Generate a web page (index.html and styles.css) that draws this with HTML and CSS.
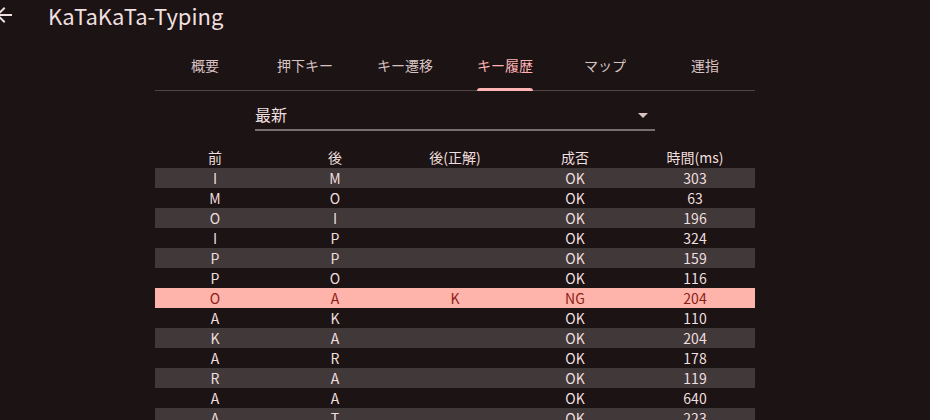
FILE: index.html
```html
<!DOCTYPE html>
<html lang="ja">
<head>
<meta charset="utf-8">
<title>KaTaKaTa-Typing</title>
<link rel="stylesheet" href="styles.css">
</head>
<body>
<header class="appbar">
  <svg class="back" viewBox="0 0 24 24" width="24" height="24"><path fill="currentColor" d="M20 11H7.83l5.59-5.59L12 4l-8 8 8 8 1.41-1.41L7.83 13H20v-2z"/></svg>
  <h1 class="title">KaTaKaTa-Typing</h1>
</header>
<main class="content">
  <nav class="tabs">
    <div class="tab"><span>概要</span></div>
    <div class="tab"><span>押下キー</span></div>
    <div class="tab"><span>キー遷移</span></div>
    <div class="tab active"><span>キー履歴</span></div>
    <div class="tab"><span>マップ</span></div>
    <div class="tab"><span>運指</span></div>
  </nav>
  <div class="select-wrap">
    <div class="select">
      <span class="select-text">最新</span>
      <span class="caret"></span>
    </div>
  </div>
  <table class="history">
    <thead>
      <tr><th>前</th><th>後</th><th>後(正解)</th><th>成否</th><th>時間(ms)</th></tr>
    </thead>
    <tbody>
      <tr class="stripe"><td>I</td><td>M</td><td></td><td>OK</td><td>303</td></tr>
      <tr><td>M</td><td>O</td><td></td><td>OK</td><td>63</td></tr>
      <tr class="stripe"><td>O</td><td>I</td><td></td><td>OK</td><td>196</td></tr>
      <tr><td>I</td><td>P</td><td></td><td>OK</td><td>324</td></tr>
      <tr class="stripe"><td>P</td><td>P</td><td></td><td>OK</td><td>159</td></tr>
      <tr><td>P</td><td>O</td><td></td><td>OK</td><td>116</td></tr>
      <tr class="ng"><td>O</td><td>A</td><td>K</td><td>NG</td><td>204</td></tr>
      <tr><td>A</td><td>K</td><td></td><td>OK</td><td>110</td></tr>
      <tr class="stripe"><td>K</td><td>A</td><td></td><td>OK</td><td>204</td></tr>
      <tr><td>A</td><td>R</td><td></td><td>OK</td><td>178</td></tr>
      <tr class="stripe"><td>R</td><td>A</td><td></td><td>OK</td><td>119</td></tr>
      <tr><td>A</td><td>A</td><td></td><td>OK</td><td>640</td></tr>
      <tr class="stripe"><td>A</td><td>T</td><td></td><td>OK</td><td>223</td></tr>
    </tbody>
  </table>
</main>
</body>
</html>
```

FILE: styles.css
```css
html, body {
  margin: 0;
  padding: 0;
  background: #1b1314;
  color: #f0dfdf;
  font-family: "Noto Sans CJK JP", "Noto Sans", sans-serif;
  overflow: hidden;
  height: 420px;
}

.appbar {
  display: flex;
  align-items: center;
  height: 30px;
}

.back {
  margin-left: -8px;
  color: #f0dfdf;
  flex: none;
}

.title {
  margin: 0 0 0 32px;
  font-size: 22px;
  font-weight: 400;
  line-height: 30px;
  color: #f0dfdf;
}

.content {
  width: 600px;
  margin: 12px 0 0 155px;
}

.tabs {
  display: flex;
  height: 48px;
  border-bottom: 1px solid #524344;
}

.tab {
  flex: 1;
  display: flex;
  justify-content: center;
  font-size: 14px;
  color: #d8c2c2;
}

.tab span {
  position: relative;
  display: flex;
  align-items: center;
  height: 48px;
  box-sizing: border-box;
  padding-bottom: 3px;
}

.tab.active span {
  color: #ffb3b5;
}

.tab.active span::after {
  content: "";
  position: absolute;
  left: 0;
  right: 0;
  bottom: -1px;
  height: 3px;
  background: #ffb3b5;
  border-radius: 3px 3px 0 0;
}

.select-wrap {
  display: flex;
  justify-content: center;
  margin-top: 9px;
}

.select {
  width: 400px;
  height: 28px;
  display: flex;
  align-items: center;
  justify-content: space-between;
  border-bottom: 2px solid #7a6d6e;
  box-sizing: content-box;
  padding-bottom: 1px;
}

.select-text {
  font-size: 16px;
  color: #f0dfdf;
}

.caret {
  width: 0;
  height: 0;
  border-left: 5px solid transparent;
  border-right: 5px solid transparent;
  border-top: 5px solid #d8c2c2;
  margin-right: 7px;
  margin-top: 2px;
}

.history {
  width: 600px;
  border-collapse: collapse;
  margin-top: 16px;
  table-layout: fixed;
  font-size: 14px;
}

.history th,
.history td {
  width: 120px;
  padding: 0;
  height: 20px;
  line-height: 20px;
  text-align: center;
  font-weight: 400;
}

.history thead th {
  height: 21px;
  line-height: 20px;
  vertical-align: top;
}

.history th {
  color: #f0dfdf;
}

.history tr.stripe {
  background: #403839;
}

.history tr.ng {
  background: #ffb4ab;
  color: #8c1d18;
}
```
